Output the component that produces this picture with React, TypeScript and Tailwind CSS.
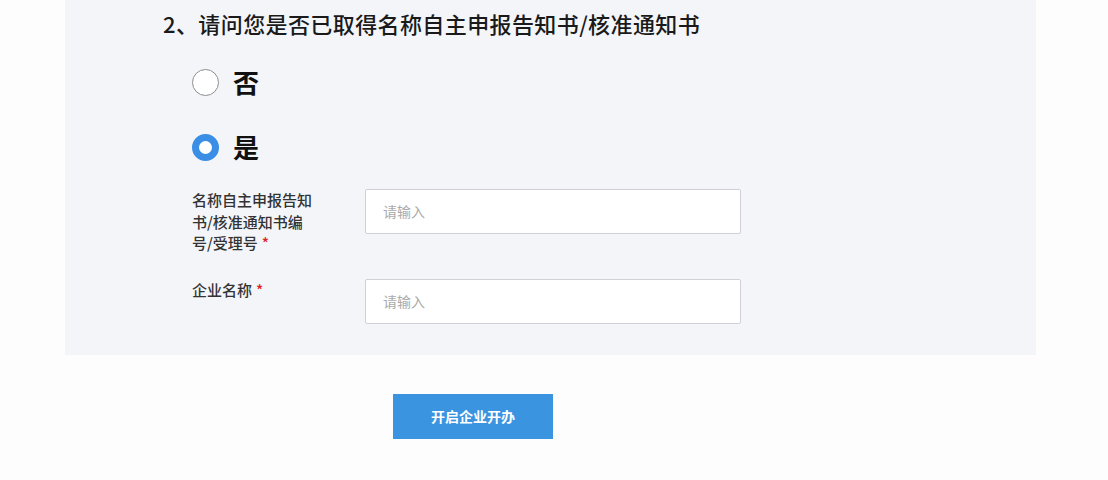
import React from 'react';

const font = { fontFamily: '"Noto Sans CJK SC", "Noto Sans", sans-serif' };

function Radio({ checked, label }: { checked: boolean; label: string }) {
  return (
    <label className="flex items-center h-[30px] cursor-pointer">
      {checked ? (
        <span className="w-[27px] h-[27px] rounded-full border-[7px] border-[#3a8ee6] bg-white" />
      ) : (
        <span className="w-[27px] h-[27px] rounded-full border border-[#8e8e8e] bg-white" />
      )}
      <span className="ml-[14px] text-[26px] font-bold text-[#111] leading-none">{label}</span>
    </label>
  );
}

function Field({ label }: { label: string }) {
  return (
    <div className="flex items-start h-[90px]">
      <div className="w-[121px] text-[15px] leading-[21.5px] font-medium text-[#333]">
        {label}
        <span className="ml-[4px] text-[#e02020]">*</span>
      </div>
      <div className="ml-[52px] w-[376px] h-[45px] border border-[#cfd1d6] rounded-[2px] bg-white flex items-center px-[17px]">
        <input
          className="w-full outline-none text-[14px] text-[#333] placeholder:text-[#aaaaaa] bg-transparent"
          placeholder="请输入"
        />
      </div>
    </div>
  );
}

export default function App() {
  return (
    <div className="w-[1108px] h-[480px] bg-[#fdfdfe] overflow-hidden" style={font}>
      <div className="ml-[65px] w-[971px] h-[355px] bg-[#f3f5f9] pl-[98px] pt-[8px]">
        <h2 className="text-[22px] leading-[30px] text-[#1a1a1a] font-medium tracking-[0.4px]">
          2、请问您是否已取得名称自主申报告知书/核准通知书
        </h2>
        <div className="pl-[29px]">
          <div className="mt-[29px] flex flex-col gap-[35px]">
            <Radio checked={false} label="否" />
            <Radio checked={true} label="是" />
          </div>
          <div className="mt-[27px] flex flex-col">
            <Field label="名称自主申报告知书/核准通知书编号/受理号" />
            <Field label="企业名称" />
          </div>
        </div>
      </div>
      <div className="ml-[393px] mt-[39px]">
        <button className="w-[160px] h-[45px] bg-[#3b94e0] text-white text-[14px] font-bold">
          开启企业开办
        </button>
      </div>
    </div>
  );
}
